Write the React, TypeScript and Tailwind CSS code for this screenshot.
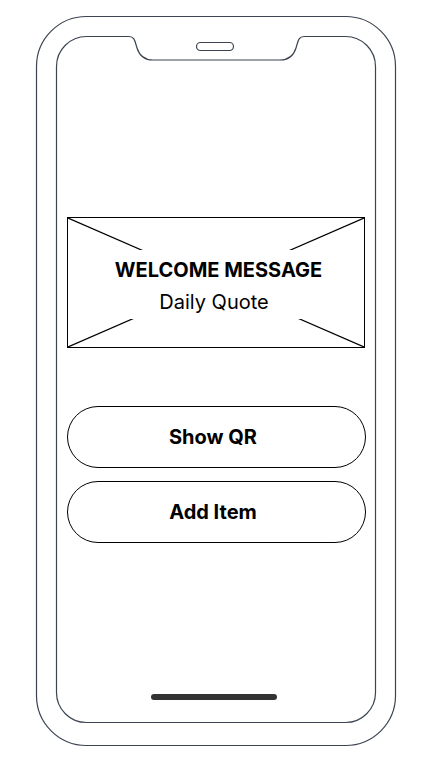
import React from "react";

function PhoneFrame() {
  return (
    <svg
      className="absolute inset-0 pointer-events-none"
      width="433"
      height="759"
      viewBox="0 0 433 759"
      fill="none"
    >
      <rect x="36.5" y="16.5" width="359" height="729" rx="50" stroke="#3b4450" strokeWidth="1.2" />
      <path
        d="M 86.5 36.5 H 129 C 135 36.5 135 42 137 48 C 139.5 56 145 60 153 60 H 280 C 288 60 293.5 56 296 48 C 298 42 298 36.5 304 36.5 H 345.5 A 30 30 0 0 1 375.5 66.5 V 692.5 A 30 30 0 0 1 345.5 722.5 H 86.5 A 30 30 0 0 1 56.5 692.5 V 66.5 A 30 30 0 0 1 86.5 36.5 Z"
        stroke="#3b4450"
        strokeWidth="1.2"
      />
      <rect x="196.5" y="42.5" width="37" height="8" rx="4" stroke="#3b4450" strokeWidth="1.2" />
      <rect x="151" y="694" width="126" height="6" rx="3" fill="#333333" />
    </svg>
  );
}

export default function App() {
  return (
    <div
      className="relative w-[433px] h-[759px] bg-white overflow-hidden"
      style={{ fontFamily: "Inter, 'Noto Sans', sans-serif" }}
    >
      <PhoneFrame />
      <div className="relative flex flex-col pl-[67px] pt-[217px] w-[365px]">
        <div className="relative w-[298px] h-[131px] border border-black flex items-center justify-center">
          <svg
            className="absolute inset-0 w-full h-full"
            viewBox="0 0 296 129"
            preserveAspectRatio="none"
          >
            <line x1="0" y1="0" x2="296" y2="129" stroke="#000" strokeWidth="1.2" />
            <line x1="296" y1="0" x2="0" y2="129" stroke="#000" strokeWidth="1.2" />
          </svg>
          <div className="relative w-full h-[69px] mt-[4px] bg-white flex flex-col items-center pt-[6px] gap-[4px] text-black">
            <div className="text-[20px] leading-[28px] font-bold pl-[5px]">WELCOME MESSAGE</div>
            <div className="text-[20px] leading-[28px] font-normal pr-[4px]">Daily Quote</div>
          </div>
        </div>
        <div className="mt-[58px] flex flex-col gap-[13px]">
          <button className="w-[299px] h-[62px] rounded-full border border-black bg-white text-[20px] font-bold text-black pr-[7px]">
            Show QR
          </button>
          <button className="w-[299px] h-[62px] rounded-full border border-black bg-white text-[20px] font-bold text-black pr-[7px]">
            Add Item
          </button>
        </div>
      </div>
    </div>
  );
}
